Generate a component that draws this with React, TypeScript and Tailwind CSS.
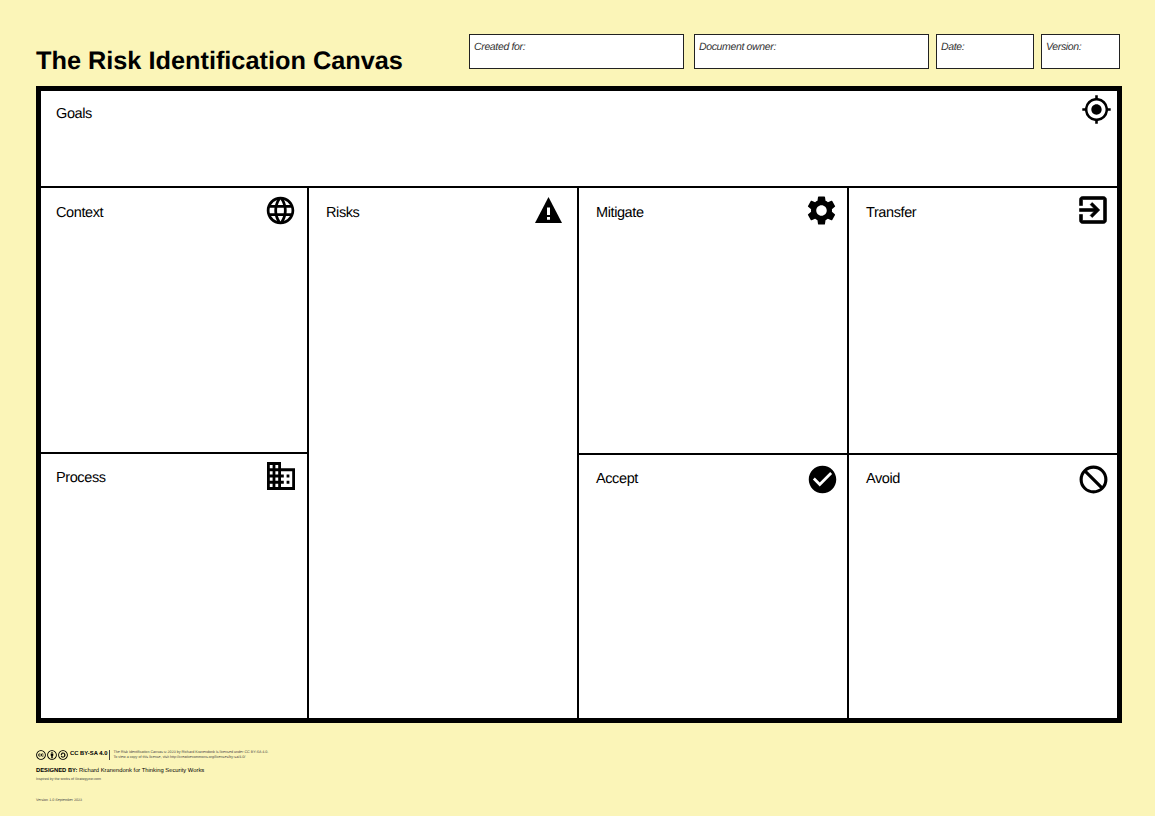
import type { ReactNode } from 'react';
import { FaCreativeCommons, FaCreativeCommonsBy, FaCreativeCommonsSa } from 'react-icons/fa';
import { MdCheckCircle, MdGpsFixed, MdLanguage, MdSettings } from 'react-icons/md';

function Field({ label, width }: { label: string; width: string }) {
  return (
    <div className={`h-[35px] border border-[#222] bg-white px-1 pt-[5px] text-[10.5px] leading-[14px] tracking-[-0.35px] text-[#333] italic ${width}`}>
      {label}
    </div>
  );
}

function Cell({ title, icon, className, titleTop = 'mt-[14px]' }: { title: string; icon: ReactNode; className: string; titleTop?: string }) {
  return (
    <section className={`flex items-start justify-between bg-white pl-[15px] ${className}`}>
      <h2 className={`text-[14.5px] leading-[20px] tracking-[-0.4px] text-black ${titleTop}`}>{title}</h2>
      {icon}
    </section>
  );
}

// taller than the stock warning glyph, so drawn by hand
function RiskIcon() {
  return (
    <svg viewBox="0 0 27 27" className="mt-[9px] mr-[15px] size-[27px]">
      <path fill="currentColor" d="M13.5 0 27 26H0Z" />
      <path fill="#fff" d="M12 10.5h3v7.5h-3zM12 20h3v2.7h-3z" />
    </svg>
  );
}

function ProcessIcon() {
  return (
    <svg viewBox="2 3 20 18" preserveAspectRatio="none" className="mt-[8px] mr-[12px] size-[28px]">
      <path
        fill="currentColor"
        d="M12 7V3H2v18h20V7H12zM6 19H4v-2h2v2zm0-4H4v-2h2v2zm0-4H4V9h2v2zm0-4H4V5h2v2zm4 12H8v-2h2v2zm0-4H8v-2h2v2zm0-4H8V9h2v2zm0-4H8V5h2v2zm10 12h-8v-2h2v-2h-2v-2h2v-2h-2V9h8v10zm-2-8h-2v2h2v-2zm0 4h-2v2h2v-2z"
      />
    </svg>
  );
}

function TransferIcon() {
  return (
    <svg viewBox="0 0 24 24" className="mt-[4px] mr-[6px] size-[36px]">
      <path
        fill="currentColor"
        stroke="currentColor"
        strokeWidth={0.4}
        d="M10.09 15.59L11.5 17l5-5-5-5-1.41 1.41L12.67 11H3v2h9.67l-2.58 2.59zM19 3H5c-1.11 0-2 .9-2 2v4h2V5h14v14H5v-4H3v4c0 1.1.89 2 2 2h14c1.1 0 2-.9 2-2V5c0-1.1-.9-2-2-2z"
      />
    </svg>
  );
}

function AvoidIcon() {
  return (
    <svg viewBox="0 0 24 24" className="mt-[8px] mr-[7px] size-[33px]">
      <circle cx="12" cy="12" r="9" fill="none" stroke="currentColor" strokeWidth={2.3} />
      <path d="M5.7 5.7l12.6 12.6" fill="none" stroke="currentColor" strokeWidth={2.3} />
    </svg>
  );
}

export default function App() {
  return (
    <div className="flex h-[816px] w-[1155px] flex-col overflow-hidden bg-[#fbf5b8] pt-[34px] pl-[36px] font-['Liberation_Sans',Arial,sans-serif] text-black [text-rendering:geometricPrecision]">
      <header className="flex h-[52px] items-start">
        <h1 className="mt-[10px] w-[433px] text-[25.3px] leading-[34px] font-bold whitespace-nowrap">The Risk Identification Canvas</h1>
        <Field label="Created for:" width="w-[215px]" />
        <Field label="Document owner:" width="ml-[10px] w-[235px]" />
        <Field label="Date:" width="ml-[7px] w-[98px]" />
        <Field label="Version:" width="ml-[7px] w-[79px]" />
      </header>

      <main className="flex h-[637px] w-[1086px] flex-col gap-[2px] border-[5px] border-black bg-black">
        <Cell
          title="Goals"
          titleTop="mt-[13px]"
          className="h-[95px] shrink-0"
          icon={<MdGpsFixed className="mt-[3px] mr-[5px] size-[31px]" />}
        />
        <div className="grid h-[530px] grid-cols-[266px_268px_268px_268px] gap-[2px]">
          <div className="flex flex-col gap-[2px]">
            <Cell title="Context" titleTop="mt-[15px]" className="h-[264px] shrink-0" icon={<MdLanguage className="mt-[6px] mr-[10px] size-[33px]" />} />
            <Cell title="Process" className="flex-1" icon={<ProcessIcon />} />
          </div>
          <Cell title="Risks" titleTop="mt-[15px]" className="pl-[17px]" icon={<RiskIcon />} />
          <div className="flex flex-col gap-[2px]">
            <Cell title="Mitigate" titleTop="mt-[15px]" className="h-[265px] shrink-0 pl-[17px]" icon={<MdSettings className="mt-[5px] mr-[8px] size-[35px]" />} />
            <Cell title="Accept" className="flex-1 pl-[17px]" icon={<MdCheckCircle className="mt-[8px] mr-[8px] size-[33px]" />} />
          </div>
          <div className="flex flex-col gap-[2px]">
            <Cell title="Transfer" titleTop="mt-[15px]" className="h-[265px] shrink-0 pl-[17px]" icon={<TransferIcon />} />
            <Cell title="Avoid" className="flex-1 pl-[17px]" icon={<AvoidIcon />} />
          </div>
        </div>
      </main>

      <footer className="mt-[26px]">
        <div className="flex h-[11px] items-center">
          <div className="flex items-center gap-[1px]">
            <FaCreativeCommons className="size-[10px]" />
            <FaCreativeCommonsBy className="size-[10px]" />
            <FaCreativeCommonsSa className="size-[10px]" />
          </div>
          <span className="ml-[2px] text-[5.85px] font-bold whitespace-nowrap">CC BY-SA 4.0</span>
          <div className="mr-[3px] ml-[2px] h-[10px] w-px bg-[#444]" />
          <p className="text-[3.67px] leading-[5px] whitespace-nowrap text-[#444]">
            The Risk Identification Canvas © 2023 by Richard Kranendonk is licensed under CC BY-SA 4.0.
            <br />
            To view a copy of this license, visit http://creativecommons.org/licenses/by-sa/4.0/
          </p>
        </div>
        <p className="mt-[7px] text-[5.8px] leading-[8px] whitespace-nowrap">
          <b>DESIGNED BY:</b> Richard Kranendonk for Thinking Security Works
        </p>
        <p className="mt-[1px] text-[3.6px] leading-[6px] text-[#444]">Inspired by the works of Strategyzer.com</p>
        <p className="mt-[15px] text-[3.65px] leading-[6px] text-[#444]">Version 1.0 September 2023</p>
      </footer>
    </div>
  );
}
